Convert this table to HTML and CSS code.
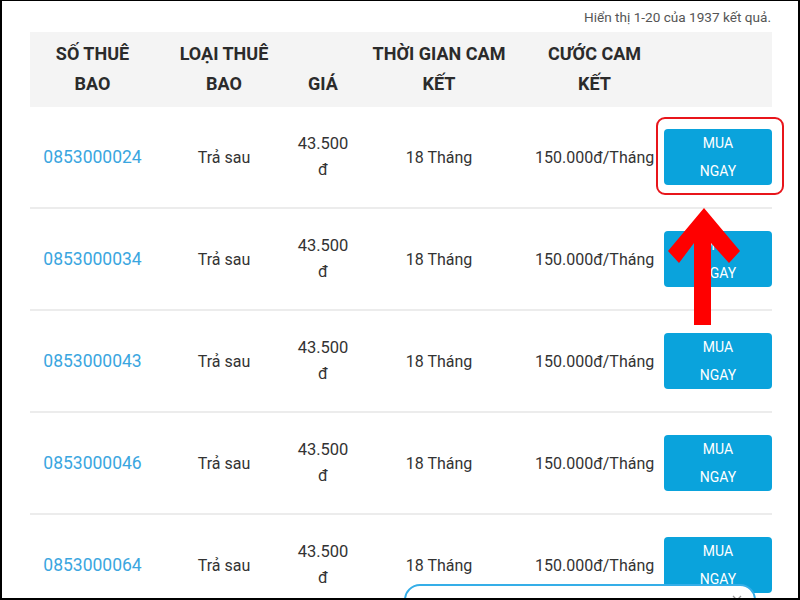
FILE: index.html
```html
<!DOCTYPE html>
<html lang="vi">
<head>
<meta charset="utf-8">
<link rel="stylesheet" href="styles.css">
</head>
<body>
<div class="frame">
  <div class="page">
    <div class="result-count">Hiển thị 1-20 của 1937 kết quả.</div>
    <div class="table">
      <div class="row head">
        <div class="cell">SỐ THUÊ BAO</div>
        <div class="cell">LOẠI THUÊ BAO</div>
        <div class="cell">GIÁ</div>
        <div class="cell">THỜI GIAN CAM KẾT</div>
        <div class="cell">CƯỚC CAM KẾT</div>
        <div class="cell"></div>
      </div>
      <div class="row">
        <div class="cell"><a class="phone">0853000024</a></div>
        <div class="cell">Trả sau</div>
        <div class="cell price-cell"><span class="price">43.500 đ</span></div>
        <div class="cell">18 Tháng</div>
        <div class="cell">150.000đ/Tháng</div>
        <div class="cell btn-cell"><span class="btn">MUA NGAY</span></div>
      </div>
      <div class="row">
        <div class="cell"><a class="phone">0853000034</a></div>
        <div class="cell">Trả sau</div>
        <div class="cell price-cell"><span class="price">43.500 đ</span></div>
        <div class="cell">18 Tháng</div>
        <div class="cell">150.000đ/Tháng</div>
        <div class="cell btn-cell"><span class="btn">MUA NGAY</span></div>
      </div>
      <div class="row">
        <div class="cell"><a class="phone">0853000043</a></div>
        <div class="cell">Trả sau</div>
        <div class="cell price-cell"><span class="price">43.500 đ</span></div>
        <div class="cell">18 Tháng</div>
        <div class="cell">150.000đ/Tháng</div>
        <div class="cell btn-cell"><span class="btn">MUA NGAY</span></div>
      </div>
      <div class="row">
        <div class="cell"><a class="phone">0853000046</a></div>
        <div class="cell">Trả sau</div>
        <div class="cell price-cell"><span class="price">43.500 đ</span></div>
        <div class="cell">18 Tháng</div>
        <div class="cell">150.000đ/Tháng</div>
        <div class="cell btn-cell"><span class="btn">MUA NGAY</span></div>
      </div>
      <div class="row">
        <div class="cell"><a class="phone">0853000064</a></div>
        <div class="cell">Trả sau</div>
        <div class="cell price-cell"><span class="price">43.500 đ</span></div>
        <div class="cell">18 Tháng</div>
        <div class="cell">150.000đ/Tháng</div>
        <div class="cell btn-cell"><span class="btn">MUA NGAY</span></div>
      </div>
    </div>
  </div>
  <div class="highlight"></div>
  <svg class="arrow" width="80" height="120" viewBox="660 205 80 120">
    <polygon fill="#ff0000" points="704,208 740,251 729,263 711,243 711,325 694,325 694,243 679,263 668,251"/>
  </svg>
  <div class="chat-popup">
    <svg class="close" width="10" height="10" viewBox="0 0 10 10"><path d="M1 1L9 9M9 1L1 9" stroke="#999" stroke-width="1.3"/></svg>
  </div>
</div>
</body>
</html>
```

FILE: styles.css
```css
* { box-sizing: border-box; }
html, body { margin: 0; padding: 0; background: #fff; }
body { font-family: Roboto, "Noto Sans", sans-serif; color: #333; }
.frame {
  position: relative;
  width: 800px;
  height: 600px;
  border-style: solid;
  border-color: #000;
  border-width: 1px 2px 2px 2px;
  overflow: hidden;
}
.page { padding: 6px 26px 0 28px; }
.result-count {
  text-align: right;
  font-size: 13.6px;
  color: #555;
  line-height: 20px;
  padding-right: 1px;
  margin-bottom: 5px;
}
.table { width: 742px; }
.row {
  display: grid;
  grid-template-columns: 125px 138px 60px 172px 139px 108px;
  align-items: center;
  height: 102px;
  border-bottom: 2px solid #ececec;
  font-size: 16px;
  color: #333;
}
.row.head {
  height: 75px;
  background: #f4f4f4;
  border-bottom: 0;
  align-items: end;
  font-weight: 700;
  font-size: 18px;
  line-height: 30px;
  color: #2b2b2b;
  padding-bottom: 8px;
}
.cell { text-align: center; padding: 0 10px; }
.price-cell { padding: 0; }
.price { display: inline-block; width: min-content; line-height: 26px; font-size: 16.5px; }
.phone { color: #3aa6e0; font-size: 17.5px; text-decoration: none; }
.btn-cell { padding: 0; }
.btn {
  display: block;
  background: #0aa3dc;
  color: #fff;
  font-size: 14px;
  line-height: 28px;
  height: 56px;
  padding: 0 30px;
  border-radius: 4px;
}
.highlight {
  position: absolute;
  left: 654px;
  top: 116px;
  width: 128px;
  height: 78px;
  border: 2px solid #e8151b;
  border-radius: 9px;
}
.arrow { position: absolute; left: 658px; top: 204px; }
.chat-popup {
  position: absolute;
  left: 402px;
  top: 583px;
  width: 352px;
  height: 60px;
  border: 2px solid #35aee8;
  border-radius: 16px;
  background: #fff;
}
.close {
  position: absolute;
  right: 12px;
  top: 9px;
}
```
